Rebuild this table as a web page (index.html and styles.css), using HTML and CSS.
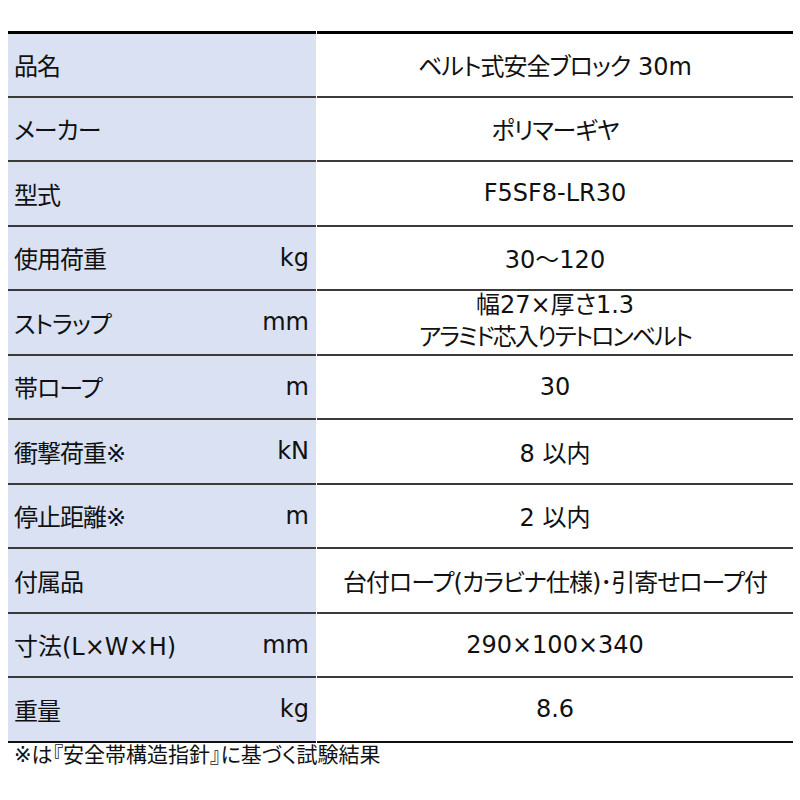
FILE: index.html
```html
<!DOCTYPE html>
<html lang="ja">
<head>
<meta charset="utf-8">
<link rel="stylesheet" href="styles.css">
</head>
<body>
<div class="sheet">
  <div class="spec">
    <div class="row first"><div class="key"><span class="jp">品名</span><span></span></div><div class="val"><span><span class="jp">ベルト式安全ブロック</span> 30m</span></div></div>
    <div class="row"><div class="key"><span class="jp">メーカー</span><span></span></div><div class="val"><span class="jp">ポリマーギヤ</span></div></div>
    <div class="row"><div class="key"><span class="jp">型式</span><span></span></div><div class="val">F5SF8-LR30</div></div>
    <div class="row"><div class="key"><span class="jp">使用荷重</span><span>kg</span></div><div class="val">30～120</div></div>
    <div class="row"><div class="key"><span class="jp">ストラップ</span><span>mm</span></div><div class="val two"><span>幅27×厚さ1.3</span><span class="jp tight">アラミド芯入りテトロンベルト</span></div></div>
    <div class="row"><div class="key"><span class="jp">帯ロープ</span><span>m</span></div><div class="val">30</div></div>
    <div class="row"><div class="key"><span class="jp">衝撃荷重※</span><span>kN</span></div><div class="val">8 以内</div></div>
    <div class="row"><div class="key"><span class="jp">停止距離※</span><span>m</span></div><div class="val">2 以内</div></div>
    <div class="row"><div class="key"><span class="jp">付属品</span><span></span></div><div class="val"><span class="jp">台付ロープ(カラビナ仕様)･引寄せロープ付</span></div></div>
    <div class="row"><div class="key"><span>寸法(L×W×H)</span><span>mm</span></div><div class="val">290×100×340</div></div>
    <div class="row last"><div class="key"><span class="jp">重量</span><span>kg</span></div><div class="val">8.6</div></div>
  </div>
  <p class="note">※は『安全帯構造指針』に基づく試験結果</p>
</div>
</body>
</html>
```

FILE: styles.css
```css
html, body {
  margin: 0;
  padding: 0;
  background: #ffffff;
}
body {
  font-family: "DejaVu Sans", "Noto Sans CJK JP", sans-serif;
  font-feature-settings: "palt";
  color: #111111;
}
.sheet {
  padding: 31px 0 0 8px;
  width: 785px;
}
.spec {
  display: flex;
  flex-direction: column;
}
.row {
  display: flex;
  gap: 1px;
  height: 64.5px;
}
.key, .val {
  box-sizing: border-box;
  border-top: 2px solid #3a3a3a;
  font-size: 24px;
}
.first .key, .first .val {
  border-top: 3px solid #000000;
}
.last .key, .last .val {
  border-bottom: 2px solid #111111;
  height: 66.5px;
}
.key {
  width: 308px;
  background: #d9e1f2;
  display: flex;
  justify-content: space-between;
  align-items: center;
  padding: 0 7px 0 6px;
}
.val {
  width: 476px;
  display: flex;
  justify-content: center;
  align-items: center;
  text-align: center;
}
.val.two {
  flex-direction: column;
  line-height: 32px;
  padding-bottom: 2px;
}
.jp {
  letter-spacing: -1px;
}
.jp.tight {
  letter-spacing: -2px;
}
.note {
  margin: 0;
  padding-left: 6px;
  font-size: 21px;
  line-height: 28px;
}
```
